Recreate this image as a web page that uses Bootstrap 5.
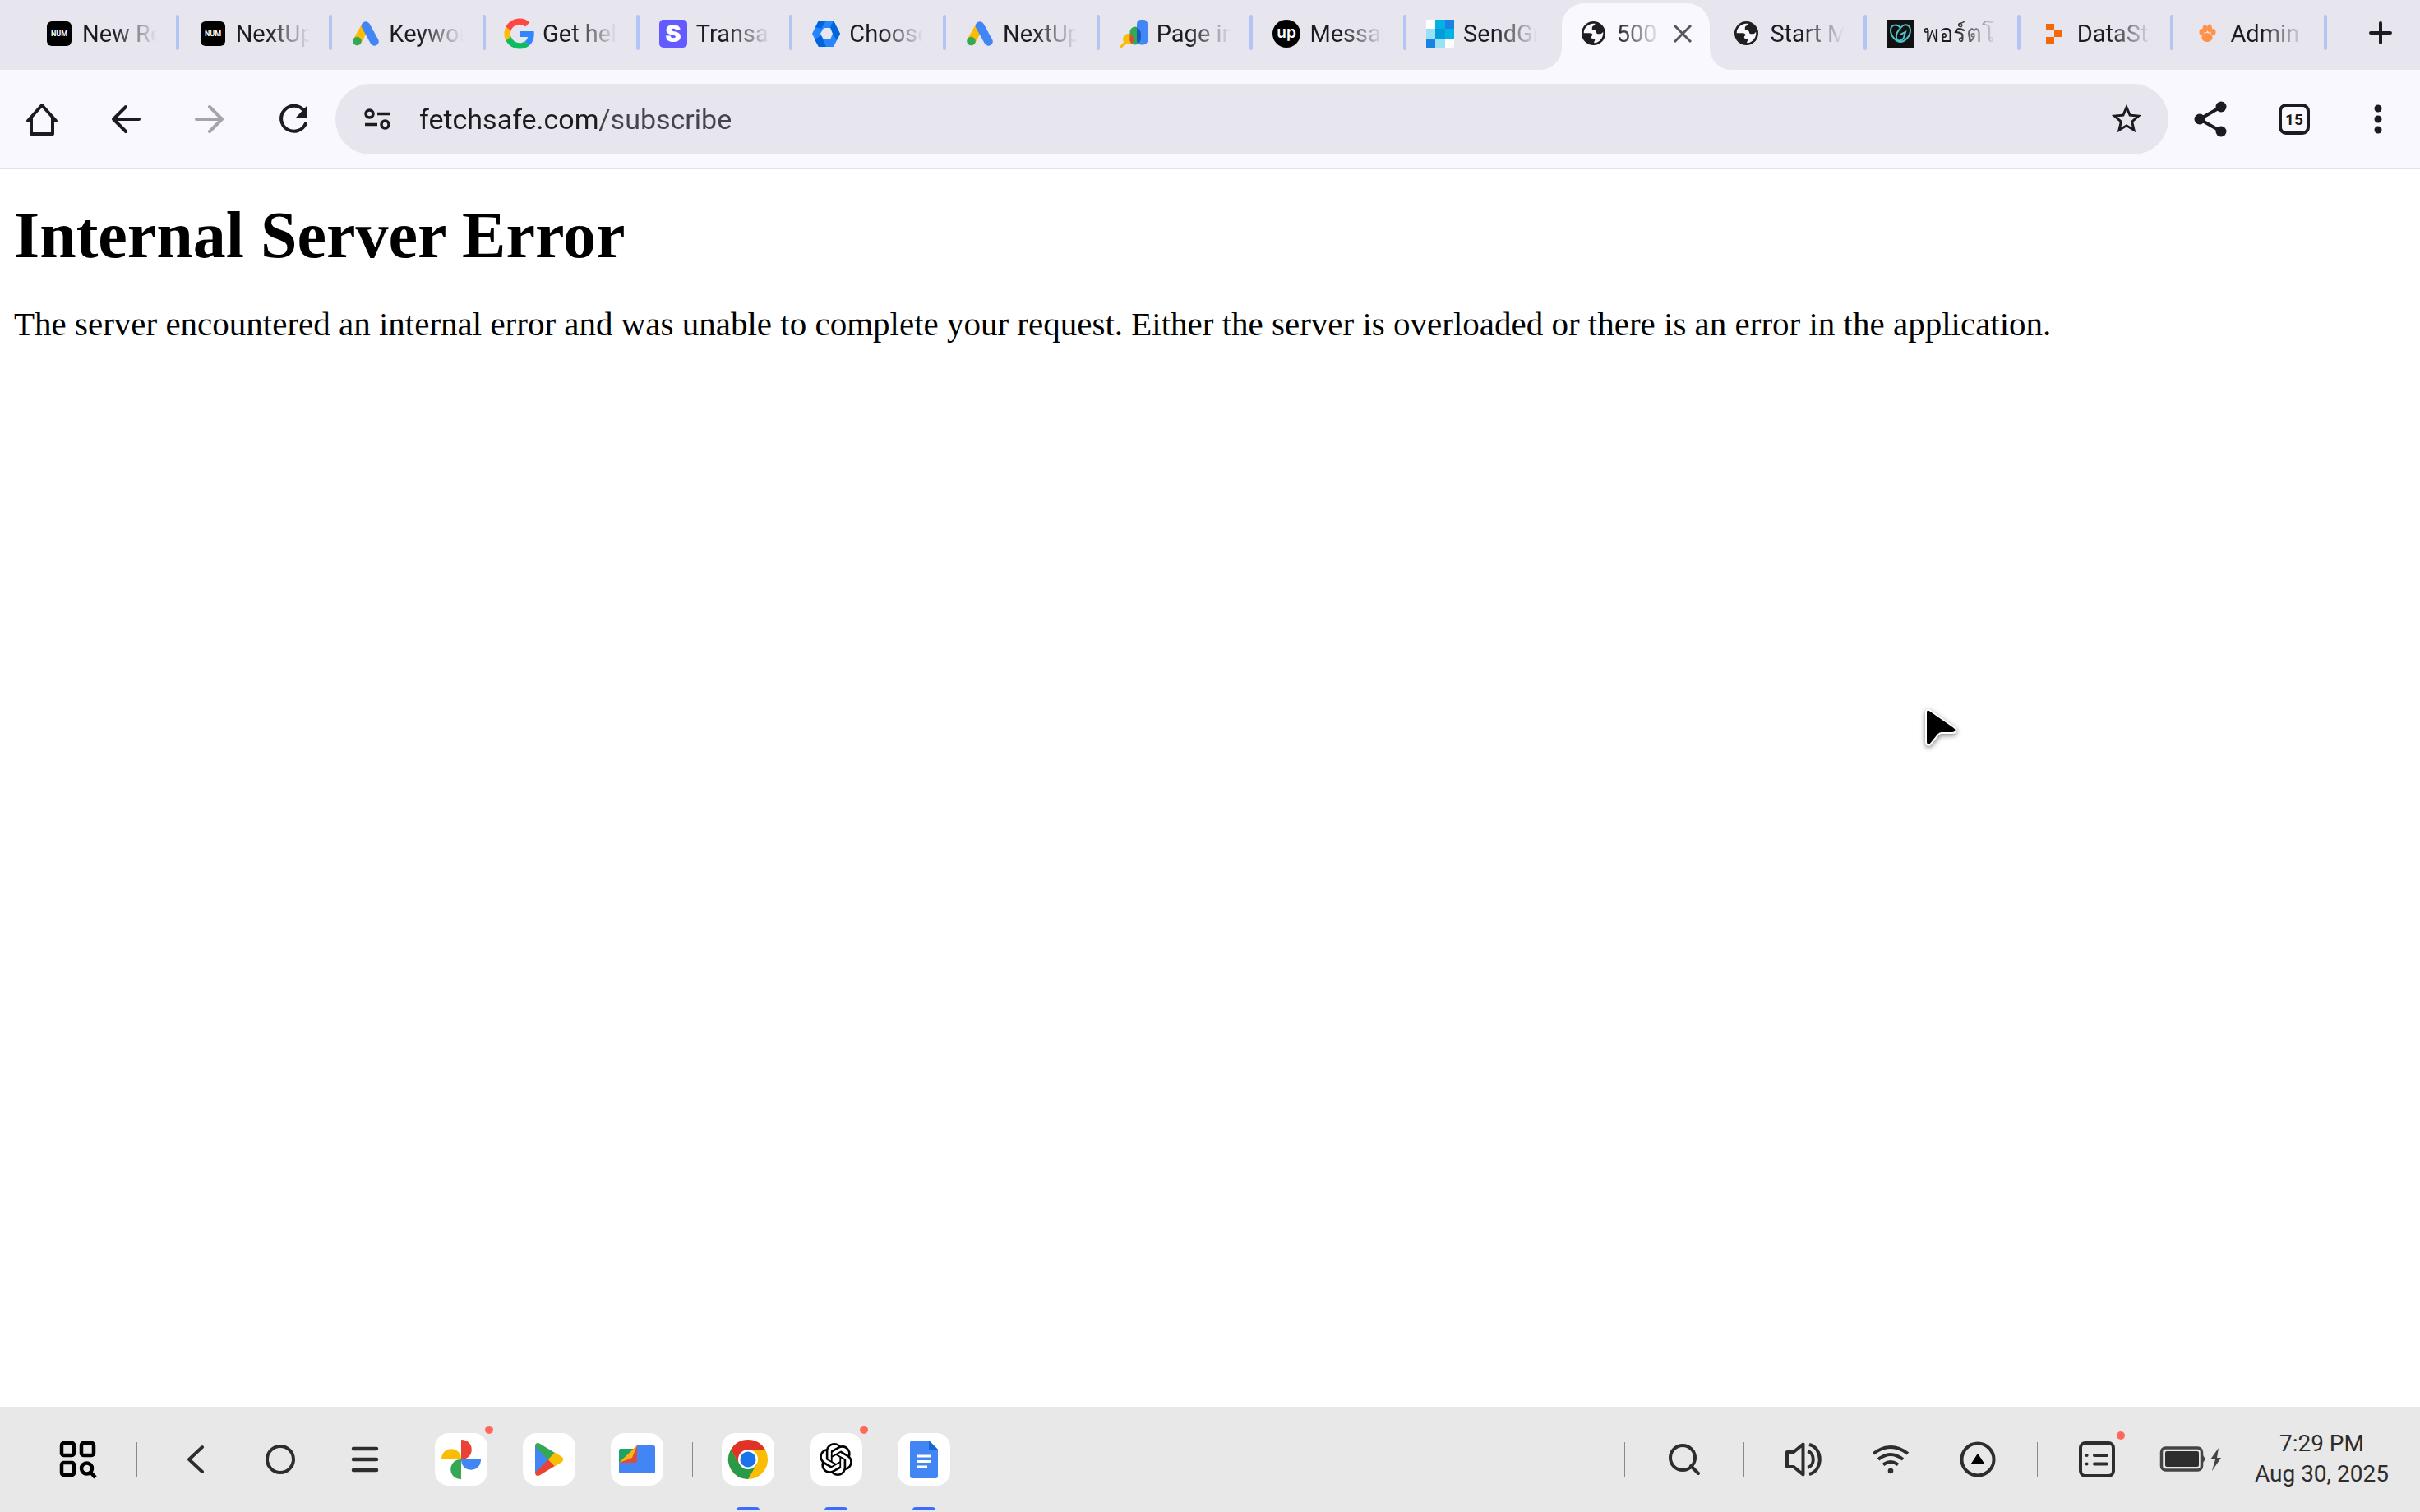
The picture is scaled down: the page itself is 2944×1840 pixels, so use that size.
<!DOCTYPE html>
<html lang="en">
<head>
<meta charset="utf-8">
<meta name="viewport" content="width=device-width, initial-scale=1">
<title>500 Internal Server Error</title>
<link href="https://cdn.jsdelivr.net/npm/bootstrap@5.3.0/dist/css/bootstrap.min.css" rel="stylesheet">
<style>
  body { font-family: Roboto, "Noto Sans", sans-serif; color: #1b1b21; background: #fff; }
  svg { display: block; flex: none; overflow: visible; }

  /* tab strip */
  .tabstrip { background: #e7e5ee; height: 85px; padding-left: 31px; }
  .tab { flex: 1 1 0; min-width: 0; height: 85px; padding: 0 0 3px 24px; color: #1b1b21; font-size: 29px; line-height: 36px; text-decoration: none; }
  .tab-title { width: 92px; margin-left: 11px; overflow: hidden; white-space: nowrap; line-height: 44px;
    -webkit-mask-image: linear-gradient(90deg, #000 42%, transparent 98%); mask-image: linear-gradient(90deg, #000 42%, transparent 98%); }
  .tab-sep { position: absolute; right: 0; top: 18px; width: 4px; height: 43px; border-radius: 2px; background: #b2c5f4; }
  .tab-current .tab-title { width: 54px; -webkit-mask-image: linear-gradient(90deg, #000, transparent 98%); mask-image: linear-gradient(90deg, #000, transparent 98%); }
  .tab-shape { position: absolute; left: -25px; bottom: 0; width: 234px; height: 81px; }
  .tab-close { margin-left: 15px; }
  .tab-add { width: 113px; height: 80px; padding-left: 16px; }
  .bare { background: none; border: 0; padding: 0; display: flex; align-items: center; justify-content: center; flex: none; color: inherit; }
  .bare.tab-add { padding-left: 16px; }

  /* toolbar */
  .toolbar { background: #f9f8ff; height: 121px; border-bottom: 2px solid #e3e2e9; }
  .tool { width: 102px; height: 86px; }
  .omnibox { background: #e7e5ee; height: 86px; border-radius: 43px; min-width: 0; }
  .url { border: 0; outline: 0; padding: 0; font-size: 34px; line-height: 44px; min-width: 0; color: #1b1b21;
    background: linear-gradient(90deg, #1b1b21 220px, #44444c 220px); -webkit-background-clip: text; background-clip: text; -webkit-text-fill-color: transparent; }

  /* document */
  .doc { padding: 34px 17px; font-family: "Liberation Serif", serif; color: #000; }
  .doc h1 { font-size: 80px; line-height: 92px; font-weight: 700; margin: 0 0 38px; }
  .doc p { font-size: 41px; line-height: 48px; margin: 0; }

  /* taskbar */
  .taskbar { background: #e8e8e8; height: 128px; padding-left: 50px; padding-right: 38px; color: #2d2d2d; }
  .rule { width: 1px; height: 42px; background: #8a8a8a; margin: 0 19px; flex: none; }
  .rule-first { margin-left: 26px; }
  .rule-wide { margin: 0 35px; }
  .launcher { width: 90px; height: 64px; }
  .nav-key { width: 103px; height: 64px; }
  .tray-key { width: 106px; height: 64px; }
  .apps { gap: 43px; }
  .nav-key + .apps { margin-left: 34px; }
  .tile { width: 64px; height: 64px; border-radius: 17px; background: #fff; }
  .dot { position: absolute; width: 10px; height: 10px; border-radius: 50%; background: #ff695c; right: -7px; top: -9px; }
  .dot-tray { right: 19px; top: -2px; }
  .running::after { content: ""; position: absolute; left: 18px; bottom: -30px; width: 28px; height: 4px; border-radius: 4px 4px 0 0; background: #3a6cff; }
  .clock { font-size: 28px; line-height: 37px; margin-left: 41px; padding-bottom: 2px; }
  .pointer { position: absolute; left: 2339px; top: 859px; filter: drop-shadow(0 2px 3px rgba(0,0,0,.5)); }
</style>
<script src="https://cdn.jsdelivr.net/npm/bootstrap@5.3.0/dist/js/bootstrap.bundle.min.js"></script>
</head>
<body class="d-flex flex-column min-vh-100">

<svg width="0" height="0" class="position-absolute" aria-hidden="true">
  <symbol id="num" viewBox="0 0 34 34"><rect x="2" y="2" width="30" height="30" rx="6"/><text x="17" y="20" font-size="9" font-weight="700" fill="#fff" text-anchor="middle">NUM</text></symbol>
  <symbol id="ads" viewBox="0 0 34 34"><path d="M17 7.500L6.500 26" stroke="#fbbc04" stroke-width="10.500"/><path d="M17 7.500L27.500 26.500" stroke="#4285f4" stroke-width="10.500" stroke-linecap="round"/><circle cx="6.500" cy="26" r="5.300" fill="#34a853"/></symbol>
  <symbol id="globe" viewBox="0 0 86 86"><circle cx="43" cy="43" r="43" fill="#1f1f1f"/><path d="M8 42C8 24 24 8 43 8h6c0 8-11 8-11 14v8c6 0 12 0 14 6 3 5 1 9 8 9h8c5 0 6-6 10-6 1 20-13 37-32 39-4-7 6-8 1-13-5-4-12-1-12-8 0-3 6-6 4-11-3-5-11-4-16-4z" fill="#f9f8ff"/></symbol>
</svg>

<nav class="tabstrip d-flex flex-shrink-0" aria-label="Tabs">
  <a href="#" class="tab position-relative d-flex align-items-center"><svg width="34" height="34"><use href="#num"/></svg><span class="tab-title">New Re</span><i class="tab-sep"></i></a>
  <a href="#" class="tab position-relative d-flex align-items-center"><svg width="34" height="34"><use href="#num"/></svg><span class="tab-title">NextUp</span><i class="tab-sep"></i></a>
  <a href="#" class="tab position-relative d-flex align-items-center"><svg width="34" height="34"><use href="#ads"/></svg><span class="tab-title">Keywor</span><i class="tab-sep"></i></a>
  <a href="#" class="tab position-relative d-flex align-items-center"><svg width="34" height="34" viewBox="2 2 44 44"><path fill="#fbbc05" d="M10.530 28.590c-.48-1.450-.76-2.990-.76-4.590s.27-3.140.76-4.590l-7.980-6.190C.92 16.460 0 20.120 0 24c0 3.880.92 7.540 2.560 10.780l7.970-6.190z"/><path fill="#ff4641" d="M24 9.500c3.540 0 6.710 1.220 9.210 3.600l6.850-6.850C35.900 2.380 30.470 0 24 0 14.620 0 6.510 5.380 2.560 13.220l7.980 6.190C12.430 13.720 17.740 9.500 24 9.500z"/><path fill="#3186ff" d="M46.980 24.550c0-1.570-.15-3.090-.38-4.550H24v9.020h12.940c-.58 2.960-2.260 5.480-4.780 7.180l7.730 6c4.510-4.180 7.090-10.360 7.090-17.650z"/><path fill="#0ebc5f" d="M24 48c6.480 0 11.930-2.130 15.890-5.810l-7.730-6c-2.150 1.450-4.920 2.300-8.160 2.300-6.260 0-11.570-4.220-13.470-9.910l-7.980 6.190C6.510 42.620 14.620 48 24 48z"/></svg><span class="tab-title">Get hel</span><i class="tab-sep"></i></a>
  <a href="#" class="tab position-relative d-flex align-items-center"><svg width="34" height="34"><rect width="34" height="34" rx="5" fill="#635bff"/><text x="17" y="27" font-family="Inter" font-size="29" font-weight="900" fill="#fff" text-anchor="middle">S</text></svg><span class="tab-title">Transac</span><i class="tab-sep"></i></a>
  <a href="#" class="tab position-relative d-flex align-items-center"><svg width="34" height="34"><path d="M8 1h18l8 16-8 16H8L0 17z" fill="#2684ff"/><path d="M8 1h9l-6 10-7-2zM26 1l8 16-4 8-6-9-2-7zM8 33l-5-9 8-5 6 14z" fill="#0065db"/><path d="M14 10h8l3 7-3 7h-8l-4-7z" fill="#e7e5ee"/></svg><span class="tab-title">Choose</span><i class="tab-sep"></i></a>
  <a href="#" class="tab position-relative d-flex align-items-center"><svg width="34" height="34"><use href="#ads"/></svg><span class="tab-title">NextUp</span><i class="tab-sep"></i></a>
  <a href="#" class="tab position-relative d-flex align-items-center"><svg width="34" height="34"><path d="M2 33l8-9" stroke="#fbbc04" stroke-width="3" stroke-linecap="round"/><circle cx="10.500" cy="23.500" r="6.500" fill="#fbbc04"/><rect x="12.500" y="8.500" width="13" height="22" rx="6.500" fill="#34a853"/><path d="M13 17.500c5 3 5 9 1 11.500l-1.500-4z" fill="#ea4335"/><rect x="21" y="0" width="13" height="30.500" rx="5" fill="#4285f4"/><path d="M21 10c5 2 5 6 5 10s-1 8-4 9l-1-4z" fill="#185abc"/></svg><span class="tab-title">Page in</span><i class="tab-sep"></i></a>
  <a href="#" class="tab position-relative d-flex align-items-center"><svg width="34" height="34"><circle cx="17" cy="17" r="17"/><text x="17" y="22" font-family="Inter" font-size="19" font-weight="600" fill="#fff" text-anchor="middle">up</text></svg><span class="tab-title">Messag</span><i class="tab-sep"></i></a>
  <a href="#" class="tab position-relative d-flex align-items-center"><svg width="34" height="34" shape-rendering="crispEdges"><path d="M0 0h11v11H0zM23 23h11v11H23z" fill="#fff"/><path d="M11 0h12v11H11zM23 11h11v12H23z" fill="#00b3e3"/><path d="M23 0h11v11H23zM0 23h11v11H0z" fill="#1a82e2"/><path d="M0 11h11v12H0zM11 23h12v11H11z" fill="#99e1f4"/><path d="M11 11h12v12H11z" fill="#009dd9"/></svg><span class="tab-title">SendGr</span></a>
  <div class="tab tab-current position-relative d-flex align-items-center">
    <svg class="tab-shape" viewBox="0 0 234 81"><path d="M0 81c16 0 27-12 27-28V28C27 12 39 0 55 0h124c16 0 28 12 28 28v25c0 16 11 28 27 28z" fill="#f9f8ff"/></svg>
    <svg class="position-relative" width="34" height="34"><use href="#globe" x="2" y="2" width="29" height="29"/></svg><span class="tab-title position-relative">500 I</span>
    <button type="button" class="bare tab-close position-relative" aria-label="Close tab"><svg width="22" height="22"><path d="M1 1l20 20M21 1L1 21" stroke="#57565e" stroke-width="3"/></svg></button>
  </div>
  <a href="#" class="tab position-relative d-flex align-items-center"><svg width="34" height="34"><use href="#globe" x="2" y="2" width="29" height="29"/></svg><span class="tab-title">Start M</span><i class="tab-sep"></i></a>
  <a href="#" class="tab position-relative d-flex align-items-center"><svg width="34" height="34"><rect width="34" height="34" fill="#111"/><g fill="none" stroke="#4ec3cc" stroke-width="2"><path d="M17 10c-4-6-12-4-12 3 0 8 8 14 12 14s12-6 12-14c0-7-7-9-11-4-5 5-7 9-6 13 1 6 9 4 10-4l1-3-6 3"/></g></svg><span class="tab-title">พอร์ตโฟ</span><i class="tab-sep"></i></a>
  <a href="#" class="tab position-relative d-flex align-items-center"><svg width="34" height="34"><path d="M7 5h10v8H7zM17 13h10v8H17zM7 21h10v8H7z" fill="#f66708"/></svg><span class="tab-title">DataSta</span><i class="tab-sep"></i></a>
  <a href="#" class="tab position-relative d-flex align-items-center"><svg width="34" height="34"><g fill="#ff9248"><ellipse cx="10.500" cy="15" rx="3" ry="4"/><ellipse cx="14.500" cy="11" rx="3" ry="4.500"/><ellipse cx="20" cy="10.500" rx="3" ry="5"/><ellipse cx="24.500" cy="15" rx="3" ry="4"/><path d="M17 16c4 0 7 3 6.500 6.500-.5 3-4 4.500-6.500 4.500s-6-1.500-6.500-4.500C10 19 13 16 17 16z"/></g></svg><span class="tab-title">Admin</span><i class="tab-sep"></i></a>
  <button type="button" class="bare tab-add" aria-label="New tab"><svg width="28" height="28"><path d="M2 14h24M14 2v24" stroke="#1b1b21" stroke-width="4" stroke-linecap="round"/></svg></button>
</nav>

<header class="toolbar d-flex align-items-center">
  <button type="button" class="bare tool" aria-label="Home"><svg width="40" height="40" fill="none" stroke="#1b1b21" stroke-width="4" stroke-linejoin="round" stroke-linecap="round"><path d="M3 22L20 3l17 19M7 18v20h26V18"/></svg></button>
  <button type="button" class="bare tool" aria-label="Back"><svg width="36" height="36" fill="none" stroke="#1b1b21" stroke-width="4" stroke-linejoin="round" stroke-linecap="round"><path d="M18 3L3 18l15 15M3 18h31"/></svg></button>
  <button type="button" class="bare tool" aria-label="Forward" disabled><svg width="36" height="36" fill="none" stroke="#a5a4ab" stroke-width="4" stroke-linejoin="round" stroke-linecap="round"><path d="M18 3l15 15-15 15M33 18H2"/></svg></button>
  <button type="button" class="bare tool" aria-label="Reload"><svg width="36" height="36" fill="none" stroke="#1b1b21" stroke-width="4" stroke-linecap="round"><path d="M31 8A15.500 15.500 0 1 0 33 23"/><path d="M35 1v15H21z" fill="#1b1b21" stroke="none"/></svg></button>
  <div class="omnibox d-flex align-items-center flex-grow-1">
    <button type="button" class="bare tool" aria-label="Site information"><svg width="32" height="28" fill="none" stroke="#1b1b21" stroke-width="3.500"><circle cx="6.500" cy="7.500" r="4.500"/><circle cx="25.500" cy="20.500" r="4.500"/><path d="M16 7.500h15M1 20.500h15"/></svg></button>
    <input class="url flex-grow-1" type="text" value="fetchsafe.com/subscribe" aria-label="Address">
    <button type="button" class="bare tool" aria-label="Bookmark"><svg width="40" height="40" viewBox="1 1 22 22"><path fill="#1b1b21" d="M22 9.240l-7.190-.62L12 2 9.190 8.630 2 9.240l5.460 4.730L5.820 21 12 17.270 18.180 21l-1.630-7.030L22 9.240zM12 15.400l-3.760 2.270 1-4.280-3.320-2.880 4.380-.38L12 6.100l1.710 4.040 4.380.38-3.320 2.880 1 4.280L12 15.400z"/></svg></button>
  </div>
  <button type="button" class="bare tool" aria-label="Share"><svg width="40" height="44"><g fill="#1b1b21"><circle cx="7" cy="22" r="6.500"/><circle cx="33" cy="7" r="6.500"/><circle cx="33" cy="37" r="6.500"/></g><path d="M33 7L7 22l26 15" fill="none" stroke="#1b1b21" stroke-width="4"/></svg></button>
  <button type="button" class="bare tool" aria-label="15 open tabs"><svg width="38" height="38"><rect x="2" y="2" width="34" height="34" rx="7" fill="none" stroke="#1b1b21" stroke-width="4"/><text x="19" y="26" font-size="19" font-weight="700" fill="#1b1b21" text-anchor="middle">15</text></svg></button>
  <button type="button" class="bare tool" aria-label="Menu"><svg width="10" height="36" fill="#1b1b21"><circle cx="5" cy="5" r="4.500"/><circle cx="5" cy="18" r="4.500"/><circle cx="5" cy="31" r="4.500"/></svg></button>
</header>

<main class="doc flex-grow-1">
  <h1>Internal Server Error</h1>
  <p>The server encountered an internal error and was unable to complete your request. Either the server is overloaded or there is an error in the application.</p>
</main>

<footer class="taskbar d-flex align-items-center">
  <button type="button" class="bare launcher" aria-label="All apps"><svg width="46" height="46" fill="none" stroke="#000" stroke-width="4.500"><rect x="3" y="3" width="15" height="15" rx="2.500"/><rect x="27" y="3" width="15" height="15" rx="2.500"/><rect x="3" y="27" width="15" height="15" rx="2.500"/><circle cx="33.500" cy="34" r="6.500"/><path d="M38 38.500l6 6.500"/></svg></button>
  <i class="rule rule-first"></i>
  <button type="button" class="bare nav-key" aria-label="Back"><svg width="20" height="34" fill="none" stroke="#2d2d2d" stroke-width="4" stroke-linejoin="round" stroke-linecap="round"><path d="M18 2L2 17l16 15"/></svg></button>
  <button type="button" class="bare nav-key" aria-label="Home"><svg width="36" height="36"><circle cx="18" cy="18" r="16" fill="none" stroke="#2d2d2d" stroke-width="4"/></svg></button>
  <button type="button" class="bare nav-key" aria-label="Recent apps"><svg width="32" height="30" stroke="#2d2d2d" stroke-width="4.500" stroke-linecap="round"><path d="M2 2h28M2 15h28M2 28h28"/></svg></button>
  <div class="apps d-flex">
    <button type="button" class="bare tile position-relative" aria-label="Photos"><svg width="48" height="48"><path d="M24 0c17 0 17 24 0 24z" fill="#ea4335"/><path d="M48 24c0 17-24 17-24 0z" fill="#4285f4"/><path d="M24 48c-17 0-17-24 0-24z" fill="#34a853"/><path d="M0 24C0 7 24 7 24 24z" fill="#fbbc04"/></svg><i class="dot"></i></button>
    <button type="button" class="bare tile position-relative" aria-label="Play Store"><svg width="34" height="40"><path d="M0 3v34l17-17z" fill="#4285f4"/><path d="M0 4c0-4 3-5 6-3l18 11-8 9z" fill="#34a853"/><path d="M0 36c0 4 3 5 6 3l18-11-8-8z" fill="#ea4335"/><path d="M24 11.500l8 5c3 2 3 5 0 7l-8 5-8-8.500z" fill="#fbbc04"/></svg></button>
    <button type="button" class="bare tile position-relative" aria-label="Files"><svg width="44" height="36"><path d="M0 20h19L22 1h20c1 0 2 1 2 2v30c0 1-1 2-2 2H2c-1 0-2-1-2-2z" fill="#4285f4"/><path d="M0 7c0-1 1-2 2-2h17L0 22z" fill="#1ea362"/><path d="M22 1v18c0 2-1 3-3 3H0z" fill="#dd4b3e"/><path d="M22 1L16 16 0 22z" fill="#fbb414"/></svg></button>
  </div>
  <i class="rule rule-wide"></i>
  <div class="apps d-flex">
    <button type="button" class="bare tile position-relative running" aria-label="Chrome"><svg width="48" height="48"><circle cx="24" cy="24" r="24" fill="#fbbc04"/><path d="M3.200 12A24 24 0 0 0 24 48L34.400 30 24 24 13.600 30z" fill="#2b9a48"/><path d="M3.200 12A24 24 0 0 1 44.800 12H24L24 24 13.600 30z" fill="#df3328"/><circle cx="24" cy="24" r="12" fill="#fff"/><circle cx="24" cy="24" r="9.500" fill="#1a73e8"/></svg></button>
    <button type="button" class="bare tile position-relative running" aria-label="ChatGPT"><svg width="40" height="40" viewBox="0 0 24 24"><path d="M22.282 9.821a5.985 5.985 0 0 0-.516-4.910 6.046 6.046 0 0 0-6.510-2.900A6.065 6.065 0 0 0 4.981 4.182a5.985 5.985 0 0 0-3.998 2.900 6.046 6.046 0 0 0 .743 7.097 5.980 5.980 0 0 0 .510 4.911 6.051 6.051 0 0 0 6.515 2.900A5.985 5.985 0 0 0 13.260 24a6.056 6.056 0 0 0 5.772-4.206 5.990 5.990 0 0 0 3.998-2.900 6.056 6.056 0 0 0-.748-7.073zM13.260 22.430a4.476 4.476 0 0 1-2.876-1.040l.141-.081 4.779-2.758a.795.795 0 0 0 .393-.681v-6.737l2.020 1.169a.071.071 0 0 1 .038.052v5.583a4.504 4.504 0 0 1-4.495 4.493zM3.600 18.304a4.470 4.470 0 0 1-.535-3.014l.142.085 4.783 2.759a.771.771 0 0 0 .780 0l5.843-3.369v2.332a.080.080 0 0 1-.033.062L9.740 19.950a4.500 4.500 0 0 1-6.140-1.646zM2.341 7.896a4.485 4.485 0 0 1 2.366-1.973V11.600a.766.766 0 0 0 .388.677l5.815 3.354-2.020 1.169a.076.076 0 0 1-.071 0l-4.830-2.787A4.504 4.504 0 0 1 2.341 7.872zm16.597 3.855l-5.833-3.387L15.119 7.200a.076.076 0 0 1 .071 0l4.830 2.791a4.494 4.494 0 0 1-.676 8.105v-5.678a.790.790 0 0 0-.407-.667zm2.010-3.023l-.141-.085-4.774-2.782a.776.776 0 0 0-.785 0L9.409 9.230V6.897a.066.066 0 0 1 .028-.061l4.830-2.787a4.500 4.500 0 0 1 6.680 4.660zM8.307 12.863l-2.020-1.164a.080.080 0 0 1-.038-.057V6.075a4.500 4.500 0 0 1 7.375-3.453l-.142.080L8.704 5.460a.795.795 0 0 0-.393.681zm1.097-2.365l2.602-1.500 2.607 1.500v2.999l-2.597 1.500-2.607-1.500z"/></svg><i class="dot"></i></button>
    <button type="button" class="bare tile position-relative running" aria-label="Docs"><svg width="34" height="46"><path d="M3 0h20l11 11v32c0 2-1 3-3 3H3c-2 0-3-1-3-3V3c0-2 1-3 3-3z" fill="#4285f4"/><path d="M23 0l11 11H23z" fill="#1967d2"/><path d="M8 19h18M8 25.500h18M8 32h13" stroke="#fff" stroke-width="3"/></svg></button>
  </div>

  <i class="rule ms-auto"></i>
  <button type="button" class="bare tray-key" aria-label="Search"><svg width="38" height="38" fill="none" stroke="#2d2d2d" stroke-width="4" stroke-linecap="round"><circle cx="17" cy="17" r="15"/><path d="M27 27l9 9"/></svg></button>
  <i class="rule"></i>
  <button type="button" class="bare tray-key" aria-label="Volume"><svg width="44" height="42" fill="none" stroke="#2d2d2d" stroke-width="4" stroke-linejoin="round"><path d="M2 12h8L21.500 2.500v37L10 30H2z"/><path d="M27 11c9 2 9 18 0 20M29 3c17 4 17 32 0 36"/></svg></button>
  <button type="button" class="bare tray-key" aria-label="Wi-Fi"><svg width="44" height="34" fill="none" stroke="#2d2d2d" stroke-width="4"><path d="M1 10q21-16 42 0M7 17q15-12 30 0M13 23.500q9-7 18 0"/><circle cx="22" cy="31" r="3.300" fill="#2d2d2d" stroke="none"/></svg></button>
  <button type="button" class="bare tray-key" aria-label="More"><svg width="42" height="42"><circle cx="21" cy="21" r="19.500" fill="none" stroke="#2d2d2d" stroke-width="4"/><path d="M21 14.500l7.500 11.500h-15z" stroke="#000" stroke-linejoin="round"/></svg></button>
  <i class="rule"></i>
  <button type="button" class="bare tray-key position-relative" aria-label="Notifications"><svg width="44" height="44" fill="none" stroke="#2d2d2d" stroke-width="4"><rect x="2" y="2" width="40" height="40" rx="6"/><path d="M19 17h15M19 27.500h15M9.500 17h.1M9.500 27.500h.1" stroke-linecap="round"/></svg><i class="dot dot-tray"></i></button>
  <svg class="ms-4" width="74" height="32"><rect x="1.500" y="2" width="49" height="27" rx="5" fill="none" stroke="#444" stroke-width="3.500"/><rect x="6" y="6" width="41" height="19" rx="2" fill="#2d2d2d"/><path d="M52 11l3 4.500-3 4.500z" fill="#444"/><path d="M71 2L61 16h6l-4 14 11-16h-5z" fill="#444"/></svg>
  <div class="clock text-center">7:29 PM<br>Aug 30, 2025</div>
</footer>

<svg class="pointer" width="46" height="54" aria-hidden="true"><path d="M8 5c-2-1-4 0-4 3v36c0 4 4 5 6 2l9-11c1-1 2-2 4-2h13c5 0 6-5 2-7z" fill="#000" stroke="#fff" stroke-width="2"/></svg>
</body>
</html>
